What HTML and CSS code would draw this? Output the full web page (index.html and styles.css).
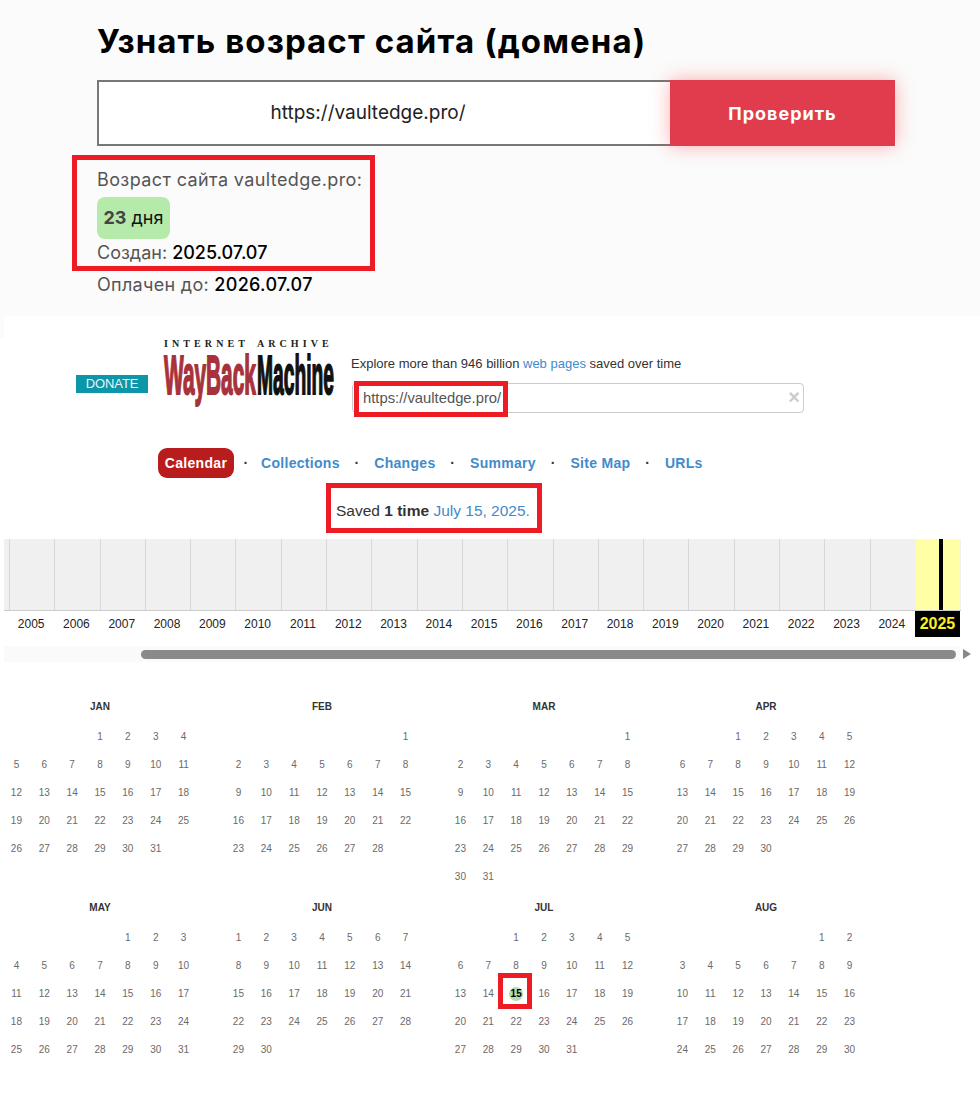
FILE: index.html
```html
<!DOCTYPE html>
<html lang="en">
<head>
    <meta charset="UTF-8">
    <meta name="viewport" content="width=device-width, initial-scale=1.0">
    <title>Узнать возраст сайта</title>
    <link rel="stylesheet" href="styles.css">
</head>
<body>

    <!-- Domain age checker -->
    <section class="checker">
        <h1>Узнать возраст сайта (домена)</h1>
        <form class="check-form">
            <div class="check-input">https://vaultedge.pro/</div>
            <button class="check-btn" type="button">Проверить</button>
        </form>
        <p class="age-title">Возраст сайта vaultedge.pro:</p>
        <div class="age-badge"><b>23</b> дня</div>
        <p class="age-line">Создан: <strong>2025.07.07</strong></p>
        <p class="age-line paid">Оплачен до: <strong>2026.07.07</strong></p>
    </section>

    <!-- Wayback machine capture -->
    <section class="wayback">
        <div class="wb-head">
            <a class="donate">DONATE</a>
            <div class="wb-logo">
                <div class="logo-ia">INTERNET ARCHIVE</div>
                <div class="logo-words">
                    <svg class="logo-word" width="93" height="56" viewBox="0 0 250 56" preserveAspectRatio="none"><text class="logo-way" x="0" y="42">WayBack</text></svg>
                    <svg class="logo-word" width="77" height="56" viewBox="0 0 224 56" preserveAspectRatio="none"><text class="logo-machine" x="0" y="42">Machine</text></svg>
                </div>
            </div>
            <div class="wb-search">
                <p class="wb-explore">Explore more than 946 billion <a>web pages</a> saved over time</p>
                <div class="wb-input">https://vaultedge.pro/<span class="wb-clear">×</span></div>
            </div>
        </div>

        <nav class="wb-nav">
            <a class="active">Calendar</a><i class="first">·</i>
            <a>Collections</a><i>·</i>
            <a>Changes</a><i>·</i>
            <a>Summary</a><i>·</i>
            <a>Site Map</a><i>·</i>
            <a>URLs</a>
        </nav>

        <p class="wb-saved">Saved <b>1 time</b> <a>July 15, 2025.</a></p>

        <div class="timeline">
            <div class="tl-col"><span>2005</span></div>
            <div class="tl-col"><span>2006</span></div>
            <div class="tl-col"><span>2007</span></div>
            <div class="tl-col"><span>2008</span></div>
            <div class="tl-col"><span>2009</span></div>
            <div class="tl-col"><span>2010</span></div>
            <div class="tl-col"><span>2011</span></div>
            <div class="tl-col"><span>2012</span></div>
            <div class="tl-col"><span>2013</span></div>
            <div class="tl-col"><span>2014</span></div>
            <div class="tl-col"><span>2015</span></div>
            <div class="tl-col"><span>2016</span></div>
            <div class="tl-col"><span>2017</span></div>
            <div class="tl-col"><span>2018</span></div>
            <div class="tl-col"><span>2019</span></div>
            <div class="tl-col"><span>2020</span></div>
            <div class="tl-col"><span>2021</span></div>
            <div class="tl-col"><span>2022</span></div>
            <div class="tl-col"><span>2023</span></div>
            <div class="tl-col"><span>2024</span></div>
            <div class="tl-col current"><span>2025</span></div>
        </div>

        <div class="tl-scroll">
            <div class="tl-track"><div class="tl-thumb"></div></div>
            <div class="tl-arrow"></div>
        </div>

        <div class="calendar">
            <div class="month">
                <h4>JAN</h4>
                <div class="days start-4"><span>1</span><span>2</span><span>3</span><span>4</span><span>5</span><span>6</span><span>7</span><span>8</span><span>9</span><span>10</span><span>11</span><span>12</span><span>13</span><span>14</span><span>15</span><span>16</span><span>17</span><span>18</span><span>19</span><span>20</span><span>21</span><span>22</span><span>23</span><span>24</span><span>25</span><span>26</span><span>27</span><span>28</span><span>29</span><span>30</span><span>31</span></div>
            </div>
            <div class="month">
                <h4>FEB</h4>
                <div class="days start-7"><span>1</span><span>2</span><span>3</span><span>4</span><span>5</span><span>6</span><span>7</span><span>8</span><span>9</span><span>10</span><span>11</span><span>12</span><span>13</span><span>14</span><span>15</span><span>16</span><span>17</span><span>18</span><span>19</span><span>20</span><span>21</span><span>22</span><span>23</span><span>24</span><span>25</span><span>26</span><span>27</span><span>28</span></div>
            </div>
            <div class="month">
                <h4>MAR</h4>
                <div class="days start-7"><span>1</span><span>2</span><span>3</span><span>4</span><span>5</span><span>6</span><span>7</span><span>8</span><span>9</span><span>10</span><span>11</span><span>12</span><span>13</span><span>14</span><span>15</span><span>16</span><span>17</span><span>18</span><span>19</span><span>20</span><span>21</span><span>22</span><span>23</span><span>24</span><span>25</span><span>26</span><span>27</span><span>28</span><span>29</span><span>30</span><span>31</span></div>
            </div>
            <div class="month">
                <h4>APR</h4>
                <div class="days start-3"><span>1</span><span>2</span><span>3</span><span>4</span><span>5</span><span>6</span><span>7</span><span>8</span><span>9</span><span>10</span><span>11</span><span>12</span><span>13</span><span>14</span><span>15</span><span>16</span><span>17</span><span>18</span><span>19</span><span>20</span><span>21</span><span>22</span><span>23</span><span>24</span><span>25</span><span>26</span><span>27</span><span>28</span><span>29</span><span>30</span></div>
            </div>
            <div class="month">
                <h4>MAY</h4>
                <div class="days start-5"><span>1</span><span>2</span><span>3</span><span>4</span><span>5</span><span>6</span><span>7</span><span>8</span><span>9</span><span>10</span><span>11</span><span>12</span><span>13</span><span>14</span><span>15</span><span>16</span><span>17</span><span>18</span><span>19</span><span>20</span><span>21</span><span>22</span><span>23</span><span>24</span><span>25</span><span>26</span><span>27</span><span>28</span><span>29</span><span>30</span><span>31</span></div>
            </div>
            <div class="month">
                <h4>JUN</h4>
                <div class="days"><span>1</span><span>2</span><span>3</span><span>4</span><span>5</span><span>6</span><span>7</span><span>8</span><span>9</span><span>10</span><span>11</span><span>12</span><span>13</span><span>14</span><span>15</span><span>16</span><span>17</span><span>18</span><span>19</span><span>20</span><span>21</span><span>22</span><span>23</span><span>24</span><span>25</span><span>26</span><span>27</span><span>28</span><span>29</span><span>30</span></div>
            </div>
            <div class="month">
                <h4>JUL</h4>
                <div class="days start-3"><span>1</span><span>2</span><span>3</span><span>4</span><span>5</span><span>6</span><span>7</span><span>8</span><span>9</span><span>10</span><span>11</span><span>12</span><span>13</span><span>14</span><span class="saved-day">15<i class="mark"></i></span><span>16</span><span>17</span><span>18</span><span>19</span><span>20</span><span>21</span><span>22</span><span>23</span><span>24</span><span>25</span><span>26</span><span>27</span><span>28</span><span>29</span><span>30</span><span>31</span></div>
            </div>
            <div class="month">
                <h4>AUG</h4>
                <div class="days start-6"><span>1</span><span>2</span><span>3</span><span>4</span><span>5</span><span>6</span><span>7</span><span>8</span><span>9</span><span>10</span><span>11</span><span>12</span><span>13</span><span>14</span><span>15</span><span>16</span><span>17</span><span>18</span><span>19</span><span>20</span><span>21</span><span>22</span><span>23</span><span>24</span><span>25</span><span>26</span><span>27</span><span>28</span><span>29</span><span>30</span></div>
            </div>
        </div>
    </section>

    <!-- Red annotation frames drawn over the screenshot -->
    <div class="frame frame-age"></div>
    <div class="frame frame-url"></div>
    <div class="frame frame-saved"></div>
    <div class="frame frame-day"></div>

</body>
</html>
```

FILE: styles.css
```css
body {
    margin: 0;
    background-color: white;
    font-family: "Liberation Sans", Arial, sans-serif;
    color: #333;
    position: relative;
}
p {
    margin: 0;
}

/* Checker block */
.checker {
    height: 316px;
    box-sizing: border-box;
    padding: 22px 85px 0 97px;
    background-color: #fbfbfb;
    font-family: Inter, "Noto Sans", sans-serif;
}
.checker h1 {
    margin: 0 0 19px;
    font-size: 33px;
    line-height: 39px;
    font-weight: 700;
    color: #000;
    letter-spacing: 1.1px;
}
.check-form {
    display: flex;
    height: 66px;
    margin-bottom: 22px;
}
.check-input {
    flex: 1;
    border: 2px solid #777;
    border-right: none;
    background-color: white;
    color: #222;
    font-size: 19px;
    line-height: 62px;
    text-align: center;
    padding-right: 33px;
}
.check-btn {
    width: 225px;
    border: none;
    background-color: #e03c4e;
    color: white;
    font-family: inherit;
    font-size: 18px;
    font-weight: 700;
    letter-spacing: 1px;
    box-shadow: 0 0 18px rgba(255, 60, 60, 0.4);
}
.age-title, .age-line {
    font-size: 18px;
    line-height: 24px;
    color: #555;
}
.age-title {
    letter-spacing: 0.4px;
}
.age-badge {
    width: 73px;
    height: 42px;
    margin: 5px 0 2px;
    box-sizing: border-box;
    background-color: #b5eaaa;
    border-radius: 8px;
    font-size: 18px;
    line-height: 42px;
    text-align: center;
    color: #111;
}
.age-badge b {
    color: #444;
}
.age-line strong {
    font-weight: 500;
    color: #000;
}
.paid {
    margin-top: 8px;
    letter-spacing: 0.3px;
}

/* Wayback block */
.wayback {
    padding-left: 4px;
    height: 782px;
    background: linear-gradient(#fbfbfb, #fbfbfb) 0 0 / 4px 22px no-repeat, white;
    overflow: hidden;
}
.wb-head {
    display: flex;
    height: 132px;
    padding-left: 72px;
}
.donate {
    width: 72px;
    height: 18px;
    margin-top: 59px;
    background-color: #0d95a8;
    color: #e8f6f8;
    font-size: 13px;
    line-height: 17px;
    text-align: center;
    letter-spacing: -0.1px;
}
.wb-logo {
    margin: 22px 0 0 16px;
    width: 170px;
    flex: none;
}
.logo-ia {
    font-family: "Liberation Serif", serif;
    font-size: 10px;
    line-height: 12px;
    font-weight: 700;
    color: #222;
    letter-spacing: 4.1px;
    word-spacing: 2px;
    white-space: nowrap;
}
.logo-words {
    display: flex;
    margin-top: 2px;
}
.logo-word {
    flex: none;
    overflow: visible;
}
.logo-word text {
    font-family: "Liberation Sans", sans-serif;
    font-size: 56px;
    font-weight: 700;
    stroke-width: 2px;
}
.logo-way {
    fill: #a8323c;
    stroke: #a8323c;
}
.logo-machine {
    fill: #111;
    stroke: #111;
}
.wb-search {
    margin-left: 17px;
    width: 453px;
    padding-top: 40px;
}
.wb-explore {
    font-size: 13px;
    line-height: 16px;
    color: #333;
}
.wb-explore a, .wb-saved a {
    color: #428bca;
}
.wb-input {
    position: relative;
    box-sizing: border-box;
    height: 30px;
    margin: 11px 0 0 1px;
    padding-left: 10px;
    border: 1px solid #ccc;
    border-radius: 4px;
    font-size: 14.8px;
    line-height: 28px;
    color: #555;
}
.wb-clear {
    position: absolute;
    right: 3px;
    top: -1px;
    font-size: 20px;
    font-weight: 700;
    color: #ccc;
}
.wb-nav {
    display: flex;
    align-items: center;
    height: 30px;
    padding-left: 154px;
    font-size: 14px;
    font-weight: 700;
    color: #428bca;
    letter-spacing: 0.3px;
}
.wb-nav a.active {
    line-height: 30px;
    width: 76px;
    text-align: center;
    background-color: #b91c1c;
    border-radius: 9px;
    color: white;
}
.wb-nav i {
    width: 34.5px;
    text-align: center;
    font-style: normal;
    color: #333;
}
.wb-nav i.first {
    width: 27px;
    padding-right: 3px;
    box-sizing: border-box;
}
.wb-saved {
    margin-top: 22px;
    padding-left: 332px;
    font-size: 15.5px;
    line-height: 22px;
}
.timeline {
    display: flex;
    margin-top: 17px;
    padding-left: 5px;
    width: 957px;
    height: 72px;
    box-sizing: border-box;
    background: linear-gradient(#f0f0f0, #f0f0f0) 0 0 / 100% 71px no-repeat, #ccc;
}
.tl-col {
    flex: 0 0 45.3px;
    box-sizing: border-box;
    height: 71px;
    border-left: 1px solid #d8d8d8;
    position: relative;
}
.tl-col span {
    position: absolute;
    top: 76px;
    left: -1px;
    width: 100%;
    font-size: 12px;
    line-height: 18px;
    text-align: center;
    color: #222;
}
.tl-col.current {
    flex: 0 0 45px;
    height: 71px;
    border-left: 1px solid #f0f0f0;
    background: linear-gradient(#000, #000) 23px 0 / 4px 100% no-repeat, #ffffa5;
}
.tl-col.current span {
    top: 72px;
    left: -1px;
    width: 45px;
    line-height: 26px;
    background-color: black;
    color: #ffee22;
    font-size: 16px;
    font-weight: 700;
}
.tl-scroll {
    display: flex;
    align-items: center;
    margin-top: 35px;
    height: 16px;
}
.tl-track {
    width: 956px;
    height: 16px;
    background-color: #fafafa;
    padding: 4px 0 0 137px;
    box-sizing: border-box;
}
.tl-thumb {
    width: 815px;
    height: 9px;
    background-color: #8a8a8a;
    border-radius: 5px;
}
.tl-arrow {
    margin-left: 3px;
    border-left: 8px solid #888;
    border-top: 5px solid transparent;
    border-bottom: 5px solid transparent;
}
.calendar {
    display: grid;
    grid-template-columns: repeat(4, 195px);
    column-gap: 27px;
    margin-top: 38px;
    margin-left: -1.5px;
}
.month {
    min-height: 201px;
}
.month h4 {
    margin: 0;
    font-size: 10px;
    line-height: 14px;
    font-weight: 700;
    text-align: center;
    color: #333;
}
.days {
    display: grid;
    grid-template-columns: repeat(7, 27.86px);
    grid-auto-rows: 28px;
    margin-top: 9px;
    font-size: 10px;
    color: #6a6a6a;
}
.days span {
    text-align: center;
    line-height: 28px;
    position: relative;
}
.start-3 span:first-child { grid-column-start: 3; }
.start-4 span:first-child { grid-column-start: 4; }
.start-5 span:first-child { grid-column-start: 5; }
.start-6 span:first-child { grid-column-start: 6; }
.start-7 span:first-child { grid-column-start: 7; }
.saved-day {
    color: #000;
    font-weight: 700;
    z-index: 0;
}
.mark {
    position: absolute;
    z-index: -1;
    left: 7px;
    top: 7px;
    width: 14px;
    height: 14px;
    border-radius: 50%;
    background-color: #b5dcb0;
}

/* Annotations */
.frame {
    position: absolute;
    box-sizing: border-box;
    border: 5px solid #ed1c24;
}
.frame-age {
    left: 72px;
    top: 155px;
    width: 303px;
    height: 116px;
}
.frame-url {
    left: 354px;
    top: 381px;
    width: 154px;
    height: 36px;
}
.frame-saved {
    left: 326px;
    top: 483px;
    width: 216px;
    height: 50px;
}
.frame-day {
    left: 498px;
    top: 973px;
    width: 34px;
    height: 36px;
}
```
